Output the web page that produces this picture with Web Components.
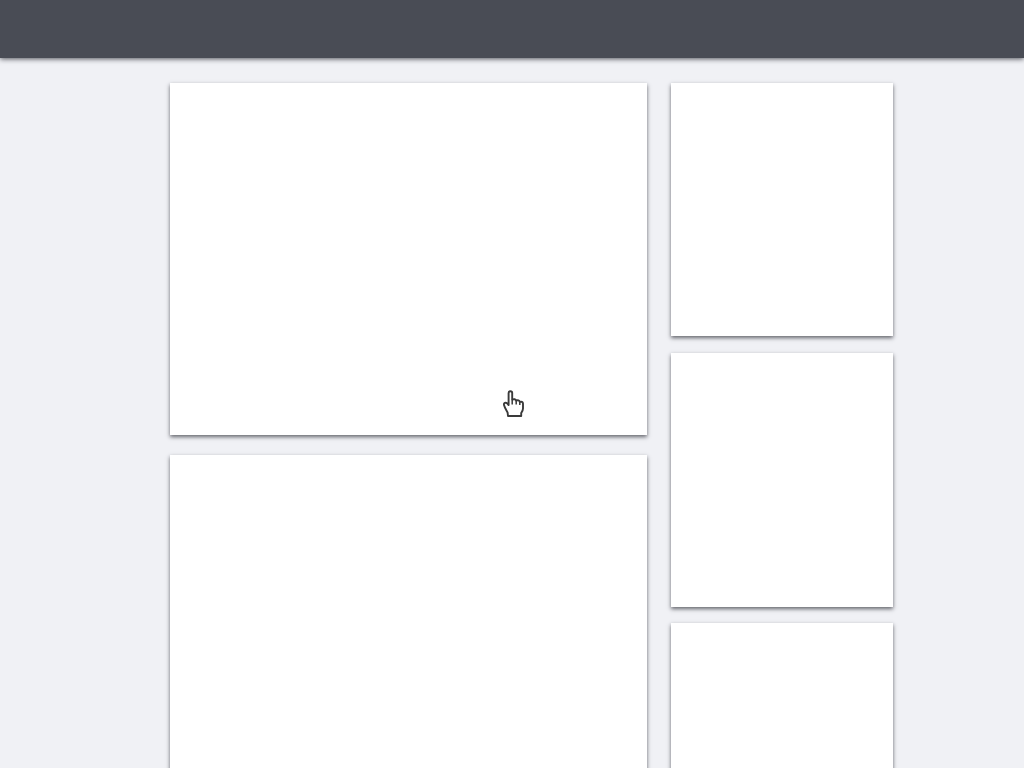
<!DOCTYPE html>
<html><head><meta charset="utf-8"><title>Dashboard</title>
<style>html,body{margin:0;height:768px;overflow:hidden;background:#f0f1f5}</style></head>
<body><app-shell></app-shell>
<script>
class TopBar extends HTMLElement{constructor(){super();this.attachShadow({mode:'open'}).innerHTML=`<style>:host{display:block;height:58px;background:#494c55;box-shadow:0 1px 5px rgba(30,32,40,.75);position:relative;z-index:2}</style>`}}
class PanelCard extends HTMLElement{constructor(){super();this.attachShadow({mode:'open'}).innerHTML=`<style>:host{display:block;background:#fff;box-shadow:0 2px 4px rgba(40,42,50,.7)}</style><slot></slot>`}}
class HandCursor extends HTMLElement{constructor(){super();this.attachShadow({mode:'open'}).innerHTML=`<style>:host{display:block;position:absolute;left:503px;top:390px;width:21px;height:27px}svg{display:block}</style>
<svg width="21" height="27" viewBox="0 0 21 27"><path d="M5 26 L4.6 22.5 C3.2 20 1.6 17.5 1 15 C.5 12.8 2.6 12 4.2 13.4 L5.6 15 L5.6 3 C5.6 .6 9.2 .6 9.2 3 L9.2 9.6 C11 8.8 12.6 9.2 13.2 10.6 C14.8 9.8 16.4 10.4 16.8 12 C18.4 11.2 20 12 20 13.8 L20 18.5 C20 20.5 18.8 22 18.2 23 L18.2 26 Z" fill="#fff" stroke="#3a3a3a" stroke-width="1.9" stroke-linejoin="round"/><path d="M9.2 9.6V14.5M13.2 10.6V14.5M16.8 12V15" stroke="#3a3a3a" stroke-width="1.5" fill="none"/></svg>`}}
class AppShell extends HTMLElement{constructor(){super();this.attachShadow({mode:'open'}).innerHTML=`<style>
:host{display:block;height:768px;overflow:hidden;position:relative}
.main{display:flex;gap:24px;padding:25px 0 0 170px}
.left{width:477px;display:flex;flex-direction:column;gap:20px}
.right{width:222px;display:flex;flex-direction:column}
.a{height:352px}.b{height:400px}
.c1{height:253px;margin-bottom:17px}.c2{height:254px;margin-bottom:16px}.c3{height:254px}
</style>
<top-bar></top-bar>
<div class="main">
<div class="left"><panel-card class="a"></panel-card><panel-card class="b"></panel-card></div>
<div class="right"><panel-card class="c1"></panel-card><panel-card class="c2"></panel-card><panel-card class="c3"></panel-card></div>
</div>
<hand-cursor></hand-cursor>`}}
customElements.define('top-bar',TopBar);
customElements.define('panel-card',PanelCard);
customElements.define('hand-cursor',HandCursor);
customElements.define('app-shell',AppShell);
</script></body></html>
